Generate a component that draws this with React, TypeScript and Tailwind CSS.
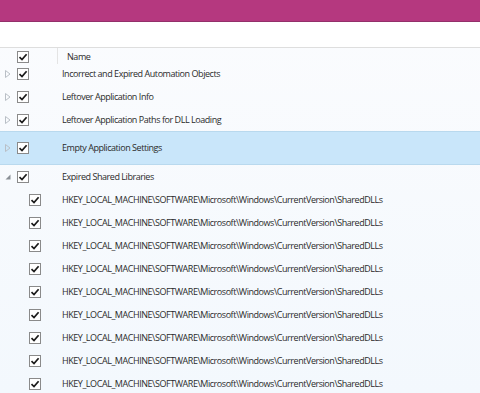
import React from "react";

const font = { fontFamily: '"Open Sans", "Noto Sans", sans-serif', letterSpacing: "-0.45px" };

function Check() {
  return (
    <div className="w-[12px] h-[12px] shrink-0 border border-[#8a8a8a] bg-white flex items-center justify-center">
      <svg width="10" height="10" viewBox="0 0 10 10">
        <path d="M1.5 5.2 L4 7.6 L8.6 2.2" fill="none" stroke="#1a1a1a" strokeWidth="1.7" />
      </svg>
    </div>
  );
}

function Collapsed() {
  return (
    <svg width="6" height="8" viewBox="0 0 6 8">
      <path d="M0.5 0.5 L5 4 L0.5 7.5 Z" fill="none" stroke="#b9bfc6" strokeWidth="1" />
    </svg>
  );
}

function Expanded() {
  return (
    <svg width="6" height="6" viewBox="0 0 6 6">
      <path d="M5.5 0.5 L5.5 5.5 L0.5 5.5 Z" fill="#8a8f96" />
    </svg>
  );
}

const parents = [
  "Incorrect and Expired Automation Objects",
  "Leftover Application Info",
  "Leftover Application Paths for DLL Loading",
];

const key = "HKEY_LOCAL_MACHINE\\SOFTWARE\\Microsoft\\Windows\\CurrentVersion\\SharedDLLs";

export default function App() {
  return (
    <div className="w-[480px] h-[393px] overflow-hidden flex flex-col bg-gradient-to-b from-[#fbfcfe] to-[#f3f8fd] text-[#2b2b2b] text-[9px]" style={font}>
      <div className="h-[22px] shrink-0 bg-[#b5387f] border-b border-[#93306a]" />
      <div className="h-[26px] shrink-0 bg-white border-b border-[#dedede]" />
      <div className="h-[14px] shrink-0 flex items-center relative">
        <div className="w-[17px] shrink-0" />
        <div className="mt-[3px]"><Check /></div>
        <div className="ml-[28px] w-px h-[16px] bg-[#e4e4e4] self-start shrink-0" />
        <span className="ml-[9px] mt-[4px] whitespace-nowrap">Name</span>
      </div>
      {parents.map((p) => (
        <div key={p} className="h-[23px] shrink-0 flex items-center">
          <div className="w-[17px] shrink-0 pl-[5px] flex items-center"><Collapsed /></div>
          <Check />
          <span className="ml-[33px] whitespace-nowrap">{p}</span>
        </div>
      ))}
      <div className="h-[34px] shrink-0 flex items-center bg-[#c9e6fa] border-y border-[#b9d9ee]">
        <div className="w-[17px] shrink-0 pl-[5px] flex items-center"><Collapsed /></div>
        <Check />
        <span className="ml-[33px] whitespace-nowrap">Empty Application Settings</span>
      </div>
      <div className="h-[23px] shrink-0 flex items-center">
        <div className="w-[17px] shrink-0 pl-[5px] flex items-center"><Expanded /></div>
        <Check />
        <span className="ml-[33px] whitespace-nowrap">Expired Shared Libraries</span>
      </div>
      {Array.from({ length: 9 }).map((_, i) => (
        <div key={i} className="h-[23px] shrink-0 flex items-center">
          <div className="w-[29px] shrink-0" />
          <Check />
          <span className="ml-[21px] whitespace-nowrap">{key}</span>
        </div>
      ))}
    </div>
  );
}
